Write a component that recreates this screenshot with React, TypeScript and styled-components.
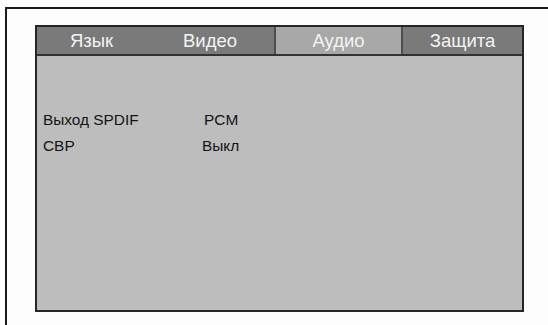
import {Component} from "react";
import styled, {createGlobalStyle} from "styled-components";

const GlobalStyle = createGlobalStyle`
  html, body {
    margin: 0;
    padding: 0;
    background: #fdfdfd;
  }
`

const Frame = styled.div`
  margin: 7px 0 0 5px;
  width: 543px;
  height: 318px;
  box-sizing: border-box;
  border-left: 2px solid #1a1a1a;
  border-top: 2px solid #1a1a1a;
  padding: 16px 0 0 28px;
  font-family: "Liberation Sans", Arial, sans-serif;
`

const Panel = styled.div`
  width: 489px;
  height: 287px;
  box-sizing: border-box;
  border: 2px solid #262626;
  display: flex;
  flex-direction: column;
  background: #bdbdbd;
`

const TabBar = styled.div`
  display: flex;
  height: 29px;
  box-sizing: border-box;
  border-bottom: 2px solid #333;
  background: #7a7a7a;
`

const Tab = styled.div<{ $width: number; $active?: boolean; $divider?: boolean }>`
  width: ${p => p.$width}px;
  box-sizing: border-box;
  display: flex;
  align-items: center;
  justify-content: center;
  font-size: 18.5px;
  color: #f4f4f4;
  background: ${p => (p.$active ? "#a8a8a8" : "#7a7a7a")};
  border-left: ${p => (p.$divider ? "2px solid #4e4e4e" : "none")};
`

const Body = styled.div`
  flex: 1;
  padding: 51px 0 0 6px;
`

const Row = styled.div`
  display: flex;
  height: 26px;
  align-items: center;
  font-size: 15.4px;
  color: #141414;
`

const Label = styled.div`
  width: 159px;
`

const Value = styled.div<{ $shift?: number }>`
  margin-left: ${p => p.$shift ?? 0}px;
`

class App extends Component {
  render() {
    return (
      <>
        <GlobalStyle/>
        <Frame>
          <Panel>
            <TabBar>
              <Tab $width={109}>Язык</Tab>
              <Tab $width={128}>Видео</Tab>
              <Tab $width={127} $active $divider>Аудио</Tab>
              <Tab $width={121} $divider>Защита</Tab>
            </TabBar>
            <Body>
              <Row>
                <Label>Выход SPDIF</Label>
                <Value $shift={2}>PCM</Value>
              </Row>
              <Row>
                <Label>CBP</Label>
                <Value>Выкл</Value>
              </Row>
            </Body>
          </Panel>
        </Frame>
      </>
    );
  }
}

export default App;
